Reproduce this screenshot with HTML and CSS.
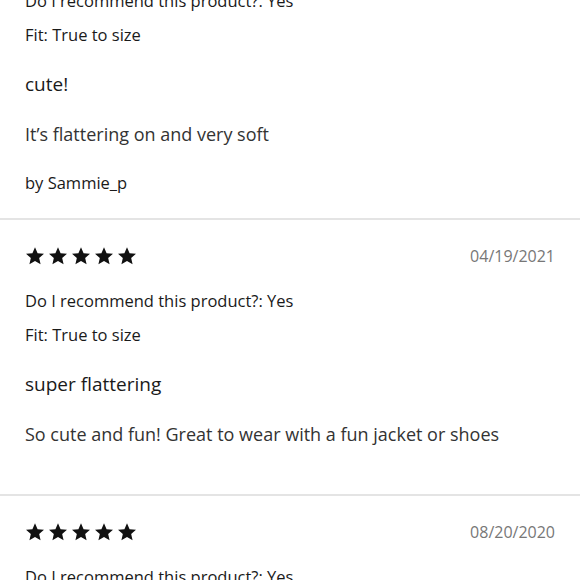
FILE: index.html
```html
<!DOCTYPE html>
<html lang="en">
<head>
<meta charset="utf-8">
<title>Reviews</title>
<link rel="stylesheet" href="styles.css">
</head>
<body>
<div class="reviews">
  <section class="review">
    <p class="meta">Do I recommend this product?: Yes</p>
    <p class="meta fit">Fit: True to size</p>
    <h3 class="title">cute!</h3>
    <p class="body">It’s flattering on and very soft</p>
    <p class="author">by Sammie_p</p>
  </section>
  <section class="review no-author">
    <div class="head">
      <div class="stars" aria-label="5 stars">
        <svg viewBox="0 0 24 24"><path d="M12 1.5l3.1 7.1 7.7.7-5.8 5.1 1.7 7.6L12 18l-6.7 4 1.7-7.6-5.8-5.1 7.7-.7z"/></svg>
        <svg viewBox="0 0 24 24"><path d="M12 1.5l3.1 7.1 7.7.7-5.8 5.1 1.7 7.6L12 18l-6.7 4 1.7-7.6-5.8-5.1 7.7-.7z"/></svg>
        <svg viewBox="0 0 24 24"><path d="M12 1.5l3.1 7.1 7.7.7-5.8 5.1 1.7 7.6L12 18l-6.7 4 1.7-7.6-5.8-5.1 7.7-.7z"/></svg>
        <svg viewBox="0 0 24 24"><path d="M12 1.5l3.1 7.1 7.7.7-5.8 5.1 1.7 7.6L12 18l-6.7 4 1.7-7.6-5.8-5.1 7.7-.7z"/></svg>
        <svg viewBox="0 0 24 24"><path d="M12 1.5l3.1 7.1 7.7.7-5.8 5.1 1.7 7.6L12 18l-6.7 4 1.7-7.6-5.8-5.1 7.7-.7z"/></svg>
      </div>
      <span class="date">04/19/2021</span>
    </div>
    <p class="meta first">Do I recommend this product?: Yes</p>
    <p class="meta fit">Fit: True to size</p>
    <h3 class="title">super flattering</h3>
    <p class="body">So cute and fun! Great to wear with a fun jacket or shoes</p>
  </section>
  <section class="review">
    <div class="head">
      <div class="stars" aria-label="5 stars">
        <svg viewBox="0 0 24 24"><path d="M12 1.5l3.1 7.1 7.7.7-5.8 5.1 1.7 7.6L12 18l-6.7 4 1.7-7.6-5.8-5.1 7.7-.7z"/></svg>
        <svg viewBox="0 0 24 24"><path d="M12 1.5l3.1 7.1 7.7.7-5.8 5.1 1.7 7.6L12 18l-6.7 4 1.7-7.6-5.8-5.1 7.7-.7z"/></svg>
        <svg viewBox="0 0 24 24"><path d="M12 1.5l3.1 7.1 7.7.7-5.8 5.1 1.7 7.6L12 18l-6.7 4 1.7-7.6-5.8-5.1 7.7-.7z"/></svg>
        <svg viewBox="0 0 24 24"><path d="M12 1.5l3.1 7.1 7.7.7-5.8 5.1 1.7 7.6L12 18l-6.7 4 1.7-7.6-5.8-5.1 7.7-.7z"/></svg>
        <svg viewBox="0 0 24 24"><path d="M12 1.5l3.1 7.1 7.7.7-5.8 5.1 1.7 7.6L12 18l-6.7 4 1.7-7.6-5.8-5.1 7.7-.7z"/></svg>
      </div>
      <span class="date">08/20/2020</span>
    </div>
    <p class="meta first">Do I recommend this product?: Yes</p>
    <p class="meta fit">Fit: True to size</p>
  </section>
</div>
</body>
</html>
```

FILE: styles.css
```css
html, body {
  margin: 0;
  padding: 0;
  background: #fff;
}

body {
  font-family: "Open Sans", Lato, sans-serif;
  color: #1a1a1a;
  overflow: hidden;
}

.reviews {
  margin-top: -11px;
}

.review {
  padding: 24px 25px 23px;
  border-bottom: 2px solid #e4e4e4;
}

.review:first-child {
  padding-top: 0;
}

.head {
  display: flex;
  justify-content: space-between;
  align-items: center;
  height: 24px;
}

.stars {
  display: flex;
  gap: 3px;
}

.stars svg {
  width: 20px;
  height: 20px;
  fill: #111;
}

.date {
  font-size: 16px;
  color: #777;
  line-height: 24px;
}

.meta {
  margin: 0;
  font-size: 16.5px;
  line-height: 24px;
}

.meta.first {
  margin-top: 21px;
}

.meta.fit {
  margin-top: 10px;
}

.title {
  margin: 24px 0 0;
  font-size: 19px;
  font-weight: 400;
  line-height: 26px;
}

.body {
  margin: 24px 0 0;
  font-size: 18px;
  line-height: 26px;
  color: #333;
}

.author {
  margin: 24px 0 0;
  font-size: 16.5px;
  line-height: 24px;
}

.no-author .body {
  margin-bottom: 24px;
}
```
